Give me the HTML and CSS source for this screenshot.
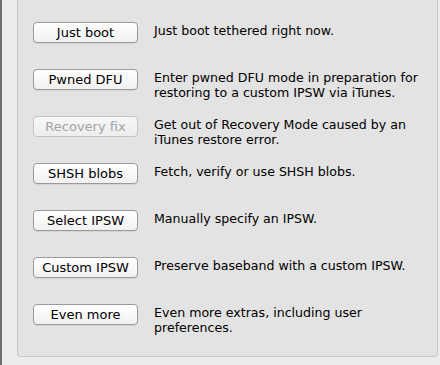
FILE: index.html
```html
<!DOCTYPE html>
<html lang="en">

<head>
    <meta charset="UTF-8">
    <title>Extras</title>
    <link rel="stylesheet" href="styles.css">
</head>

<body>
    <div class="page">
        <div class="edge"></div>
        <div class="window">
            <div class="box">
                <div class="row">
                    <button class="btn">Just boot</button>
                    <p class="desc">Just boot tethered right now.</p>
                </div>
                <div class="row">
                    <button class="btn">Pwned DFU</button>
                    <p class="desc">Enter pwned DFU mode in preparation for restoring to a custom IPSW via iTunes.</p>
                </div>
                <div class="row">
                    <button class="btn" disabled>Recovery fix</button>
                    <p class="desc">Get out of Recovery Mode caused by an iTunes restore error.</p>
                </div>
                <div class="row">
                    <button class="btn">SHSH blobs</button>
                    <p class="desc">Fetch, verify or use SHSH blobs.</p>
                </div>
                <div class="row">
                    <button class="btn">Select IPSW</button>
                    <p class="desc">Manually specify an IPSW.</p>
                </div>
                <div class="row">
                    <button class="btn">Custom IPSW</button>
                    <p class="desc">Preserve baseband with a custom IPSW.</p>
                </div>
                <div class="row">
                    <button class="btn">Even more</button>
                    <p class="desc">Even more extras, including user preferences.</p>
                </div>
            </div>
        </div>
    </div>
</body>

</html>
```

FILE: styles.css
```css
* {
    box-sizing: border-box;
    margin: 0;
    padding: 0;
}

body {
    font-family: "DejaVu Sans", sans-serif;
    font-size: 12.6px;
    color: #000;
    background-color: #ececec;
    width: 440px;
    height: 365px;
    overflow: hidden;
}

.page {
    display: flex;
    height: 365px;
}

.edge {
    width: 2px;
    background-color: #6e6e6e;
}

.window {
    flex: 1;
    background-color: #ececec;
    padding: 0 2px 0 15px;
}

.box {
    height: 357px;
    background-color: #e3e3e3;
    border: 1px solid #c6c6c6;
    border-top: none;
    border-radius: 0 0 4px 4px;
    padding: 22px 0 0 15px;
    display: grid;
    grid-auto-rows: 47px;
    align-content: start;
}

.row {
    display: flex;
    align-items: flex-start;
    gap: 16px;
}

.btn {
    flex: none;
    width: 105px;
    height: 21px;
    font-family: inherit;
    font-size: 13px;
    color: #000;
    background: linear-gradient(#ffffff, #f1f1f1);
    border: 1px solid #9a9a9a;
    border-radius: 4px;
    box-shadow: 0 1px 0 rgba(0, 0, 0, 0.06);
}

.btn:disabled {
    color: #a3a3a3;
    border-color: #c3c3c3;
    background: linear-gradient(#f7f7f7, #eeeeee);
    box-shadow: none;
}

.desc {
    line-height: 15px;
    width: 275px;
    padding-top: 1px;
}
```
